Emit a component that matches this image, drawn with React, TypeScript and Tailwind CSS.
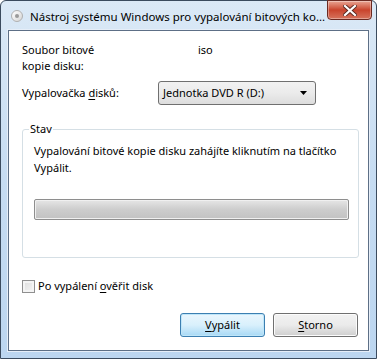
import React from "react";

const font = { fontFamily: '"Noto Sans", "Open Sans", sans-serif' };

function CloseButton() {
  return (
    <div className="mt-[-1px] flex h-[20px] w-[45px] items-center justify-center rounded-b-[4px] border border-[#6b2a22] bg-gradient-to-b from-[#e8a493] via-[#c9432c] to-[#d6725c] shadow-[inset_0_0_0_1px_rgba(255,255,255,0.35)]">
      <svg width="14" height="11" viewBox="0 0 14 11">
        <path d="M2 1 L12 10 M12 1 L2 10" stroke="#5a2a22" strokeWidth="4" strokeLinecap="square" />
        <path d="M2 1 L12 10 M12 1 L2 10" stroke="#ffffff" strokeWidth="2.2" strokeLinecap="square" />
      </svg>
    </div>
  );
}

function Button({ accel, rest, primary }: { accel: string; rest: string; primary?: boolean }) {
  return (
    <div
      className={
        "flex h-[24px] w-[85px] items-center justify-center rounded-[3px] border text-black " +
        (primary
          ? "border-[#3c7fb1] bg-gradient-to-b from-[#eaf6fd] via-[#d9f0fc] to-[#a7d9f5] shadow-[inset_0_0_0_1px_#bfe6f9]"
          : "border-[#707070] bg-gradient-to-b from-[#f2f2f2] via-[#ebebeb] to-[#cfcfcf] shadow-[inset_0_0_0_1px_#fcfcfc]")
      }
    >
      <span className="underline underline-offset-2">{accel}</span>
      {rest}
    </div>
  );
}

export default function App() {
  return (
    <div
      style={font}
      className="flex h-[359px] w-[377px] flex-col rounded-t-[6px] border border-[#3b4b5e] bg-gradient-to-b from-[#dbe9f6] via-[#c6dcf2] to-[#bcd6f0] text-[11px] leading-[16px] text-black"
    >
      <div className="flex h-[29px] items-start pl-[8px] pr-[4px]">
        <div className="mt-[7px] flex h-[16px] w-[16px] items-center justify-center">
          <div className="h-[12px] w-[12px] rounded-full border border-[#b0b0b0] bg-gradient-to-br from-[#ffffff] to-[#d6d6d6]">
            <div className="m-[3px] h-[4px] w-[4px] rounded-full bg-[#9a9a9a]" />
          </div>
        </div>
        <div className="ml-[5px] mt-[8px] whitespace-nowrap text-[11.5px] text-black">
          Nástroj systému Windows pro vypalování bitových ko...
        </div>
        <div className="ml-auto">
          <CloseButton />
        </div>
      </div>
      <div className="mx-[7px] mb-[7px] flex flex-1 flex-col border border-[#5d6f86] bg-white px-[13px] shadow-[0_0_0_1px_#e6eef8]">
        <div className="mt-[11px] flex">
          <div className="w-[176px] leading-[16px]">
            Soubor bitové
            <br />
            kopie disku:
          </div>
          <div>iso</div>
        </div>
        <div className="mt-[7px] flex items-center">
          <div className="w-[136px]">
            Vypalovačka <span className="underline underline-offset-2">d</span>isků:
          </div>
          <div className="flex h-[24px] w-[158px] items-center rounded-[3px] border border-[#707070] bg-gradient-to-b from-[#f2f2f2] via-[#ebebeb] to-[#dddddd] pl-[4px] pr-[7px]">
            <span>Jednotka DVD R (D:)</span>
            <svg className="ml-auto" width="8" height="5" viewBox="0 0 8 5">
              <path d="M0 0 H7 L3.5 4 Z" fill="#000" />
            </svg>
          </div>
        </div>
        <div className="relative mt-[24px] h-[129px] w-[337px] rounded-[3px] border border-[#d5dfe5] px-[11px] pt-[12px]">
          <div className="absolute left-[6px] top-[-9px] bg-white px-[1px]">Stav</div>
          <div className="leading-[17px]">
            Vypalování bitové kopie disku zahájíte kliknutím na tlačítko Vypálit.
          </div>
          <div className="mt-[23px] h-[21px] w-[315px] rounded-[2px] border border-[#8e8e8e] bg-gradient-to-b from-[#e6e6e6] via-[#cdcdcd] to-[#c2c2c2] shadow-[inset_0_0_0_1px_#f0f0f0]" />
        </div>
        <div className="mt-[20px] flex items-center">
          <div className="h-[13px] w-[13px] border border-[#8f8f8f] bg-gradient-to-br from-[#dcdcdc] to-[#f6f6f6] shadow-[inset_0_0_0_2px_#f4f4f4]" />
          <div className="ml-[3px]">
            Po vypálení <span className="underline underline-offset-2">o</span>věřit disk
          </div>
        </div>
        <div className="mr-[-3px] mt-[19px] flex justify-end gap-[8px]">
          <Button accel="V" rest="ypálit" primary />
          <Button accel="S" rest="torno" />
        </div>
      </div>
    </div>
  );
}
